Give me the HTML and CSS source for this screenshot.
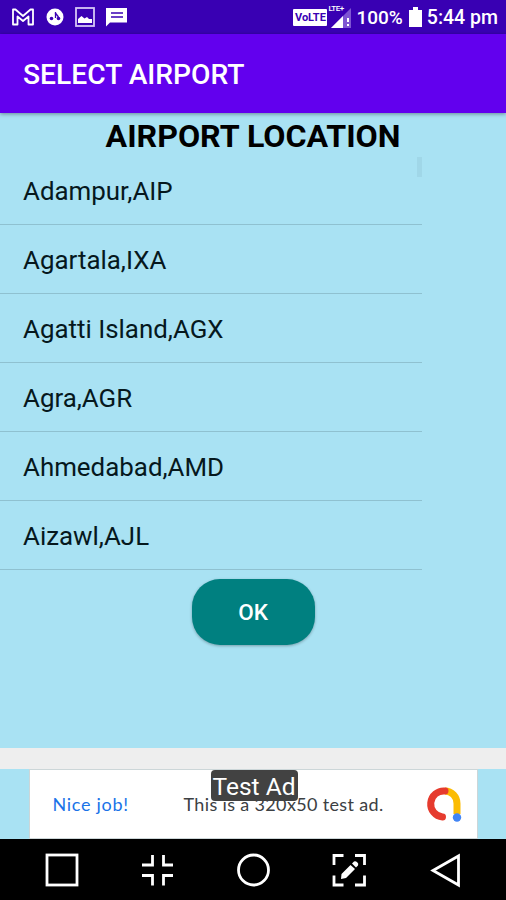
FILE: index.html
```html
<!DOCTYPE html>
<html lang="en">
<head>
    <meta charset="UTF-8">
    <meta name="viewport" content="width=device-width, initial-scale=1.0">
    <title>Select Airport</title>
    <link rel="stylesheet" href="styles.css">
</head>
<body>
    <div class="status">
        <div class="icons">
            <svg width="24" height="20" viewBox="0 0 24 20">
                <path d="M2 17.500V2.500h2.500L12 9l7.500-6.500H22v15h-4.500V9.500L12 14 6.500 9.500v8z" fill="none" stroke="#fff" stroke-width="1.800" stroke-linejoin="round"/>
            </svg>
            <svg width="18" height="20" viewBox="0 0 18 20">
                <circle cx="9" cy="10" r="8.500" fill="#fff"/>
                <circle cx="5.500" cy="11.500" r="1.800" fill="#3900b3"/>
                <circle cx="12.500" cy="11.500" r="1.800" fill="#3900b3"/>
                <path d="M9.500 5v6M9 5.500l3.500 4.500" stroke="#3900b3" stroke-width="1.300"/>
            </svg>
            <svg width="20" height="20" viewBox="0 0 20 20">
                <rect x="1" y="1" width="18" height="18" fill="none" stroke="#d5c6f5" stroke-width="1.800"/>
                <path d="M3 16v-4l3.500-3 3 2.500 2.500-1.500 2 2h3v4z" fill="#fff"/>
            </svg>
            <svg width="21" height="20" viewBox="0 0 21 20">
                <path d="M0 1h21v14.500H4L0 19.500z" fill="#fff"/>
                <path d="M5 6h12M5 10h12" stroke="#3900b3" stroke-width="1.400"/>
            </svg>
        </div>
        <span class="volte">VoLTE</span>
        <div class="signal">
            <svg width="20" height="20" viewBox="0 0 20 20">
                <path d="M20 0v20H0z" fill="#7e55d2"/>
                <path d="M12 8v12H0z" fill="#fff"/>
                <path d="M17 10v4M17 16v2" stroke="#fff" stroke-width="2"/>
            </svg>
            <span class="lte">LTE+</span>
        </div>
        <span class="percent">100%</span>
        <svg class="battery" width="13" height="20" viewBox="0 0 13 20">
            <path d="M0 3h4V0h5v3h4v17H0z" fill="#fff"/>
        </svg>
        <span class="clock">5:44 pm</span>
    </div>

    <div class="appbar">SELECT AIRPORT</div>

    <div class="content">
        <h1>AIRPORT LOCATION</h1>
        <div class="lista">
            <ul>
                <li>Adampur,AIP</li>
                <li>Agartala,IXA</li>
                <li>Agatti Island,AGX</li>
                <li>Agra,AGR</li>
                <li>Ahmedabad,AMD</li>
                <li>Aizawl,AJL</li>
            </ul>
            <div class="scroll"></div>
        </div>
        <button class="ok">OK</button>
    </div>

    <div class="gap"></div>

    <div class="ad-area">
        <div class="ad">
            <span class="nice">Nice job!</span>
            <span class="ad-text">This is a 320x50 test ad.</span>
            <svg class="admob" width="36" height="36" viewBox="0 0 36 36">
                <path d="M19 5a12 12.500 0 0 1 12 12.500V28" fill="none" stroke="#fbbc04" stroke-width="7"/>
                <path d="M19 5A13 13 0 1 0 16.500 31" fill="none" stroke="#e63b2e" stroke-width="7" stroke-linecap="round"/>
                <circle cx="31" cy="31.500" r="4.200" fill="#4285f4"/>
            </svg>
            <span class="test-ad">Test Ad</span>
        </div>
    </div>

    <div class="navbar">
        <svg width="36" height="36" viewBox="0 0 36 36"><rect x="4" y="3" width="30" height="30"/></svg>
        <svg width="36" height="36" viewBox="0 0 36 36"><path d="M13.500 3v10H3M24.500 3v10H34M13.500 33.500V23.500H3M24.500 33.500V23.500H34"/></svg>
        <svg width="36" height="36" viewBox="0 0 36 36"><circle cx="18.500" cy="18" r="15"/></svg>
        <svg width="36" height="36" viewBox="0 0 36 36">
            <path d="M3 13V3.500h9.500M24 3.500h9.500V13M3 23.500V33h9.500M24 33h9.500V23.500"/>
            <path class="fill" d="M10 27l.5-5L19.500 13l4.500 4L15 26zM21 11.500l2-2q1.500-.8 3.200.8t.8 3.200l-2 2z"/>
        </svg>
        <svg width="36" height="36" viewBox="0 0 36 36"><path d="M31.500 4v29L6 18.500z"/></svg>
    </div>
</body>
</html>
```
FILE: styles.css
```css
* {
    box-sizing: border-box;
}
body {
    margin: 0;
    height: 900px;
    overflow: hidden;
    display: flex;
    flex-direction: column;
    font-family: Roboto, sans-serif;
    background-color: #a9e2f3;
    color: #06181d;
}
.status {
    height: 34px;
    flex: none;
    display: flex;
    align-items: center;
    background-color: #3900b3;
    color: #fff;
    padding: 0 8px 0 11px;
}
.status svg {
    flex: none;
}
.icons {
    display: flex;
    gap: 11px;
}
.volte {
    margin-left: auto;
    width: 34px;
    height: 17px;
    line-height: 17px;
    border-radius: 1px;
    background-color: #fff;
    color: #3900b3;
    font-size: 11px;
    font-weight: bold;
    text-align: center;
}
.signal {
    position: relative;
    width: 20px;
    height: 20px;
    margin: 1px 5px 0 4px;
}
.lte {
    position: absolute;
    left: -3px;
    top: -3px;
    font-size: 8px;
    font-weight: 500;
    line-height: 8px;
    letter-spacing: -0.5px;
}
.percent {
    font-size: 19px;
    font-weight: 500;
    margin-right: 6px;
}
.battery {
    margin-right: 5px;
}
.clock {
    font-size: 19.500px;
    font-weight: 500;
}
.appbar {
    height: 79px;
    flex: none;
    padding-left: 23px;
    line-height: 82px;
    font-size: 28.200px;
    font-weight: 500;
    color: #fff;
    background-color: #6200ee;
    box-shadow: 0 1px 4px rgba(0, 0, 0, 0.4);
}
.content {
    height: 635px;
    flex: none;
}
h1 {
    margin: 0;
    height: 43px;
    line-height: 46px;
    font-size: 32.200px;
    font-weight: bold;
    text-align: center;
    color: #000;
}
.lista {
    position: relative;
    width: 422px;
}
ul {
    margin: 0;
    padding: 0;
    list-style: none;
}
li {
    height: 69px;
    padding-left: 23px;
    line-height: 71px;
    font-size: 25.900px;
    border-bottom: 1px solid #8fc1d0;
}
.scroll {
    position: absolute;
    right: 0;
    top: 1px;
    width: 5px;
    height: 20px;
    background-color: #a0d7e8;
}
.ok {
    display: block;
    width: 123px;
    height: 66px;
    margin: 9px auto 0;
    border: none;
    border-radius: 28px;
    background-color: #008080;
    color: #fff;
    font-family: Roboto, sans-serif;
    font-size: 22.500px;
    font-weight: 500;
    box-shadow: 0 1px 3px rgba(0, 0, 0, 0.3);
}
.gap {
    height: 21px;
    flex: none;
    background-color: #eee;
}
.ad-area {
    height: 70px;
    flex: none;
}
.ad {
    position: relative;
    width: 449px;
    height: 70px;
    margin: 0 auto;
    display: flex;
    align-items: center;
    background-color: #fff;
    border: 1px solid #ccd6d8;
    font-family: Lato, sans-serif;
    font-size: 18px;
    letter-spacing: 0.35px;
}
.nice {
    width: 131px;
    margin-left: 23px;
    color: #1a73e8;
    letter-spacing: 0.7px;
}
.ad-text {
    color: #3c4043;
}
.admob {
    margin-left: auto;
    margin-right: 15px;
}
.test-ad {
    position: absolute;
    left: 181px;
    top: 0;
    width: 87px;
    height: 31px;
    line-height: 33px;
    border-radius: 4px;
    background-color: #424242;
    color: #fff;
    font-family: Roboto, sans-serif;
    font-size: 24.500px;
    letter-spacing: 0;
    text-align: center;
}
.navbar {
    height: 61px;
    flex: none;
    display: flex;
    justify-content: space-between;
    align-items: center;
    padding: 0 43px;
    background-color: #000;
}
.navbar svg {
    fill: none;
    stroke: #fff;
    stroke-width: 2.800;
}
.navbar .fill {
    fill: #fff;
    stroke: none;
}
```
